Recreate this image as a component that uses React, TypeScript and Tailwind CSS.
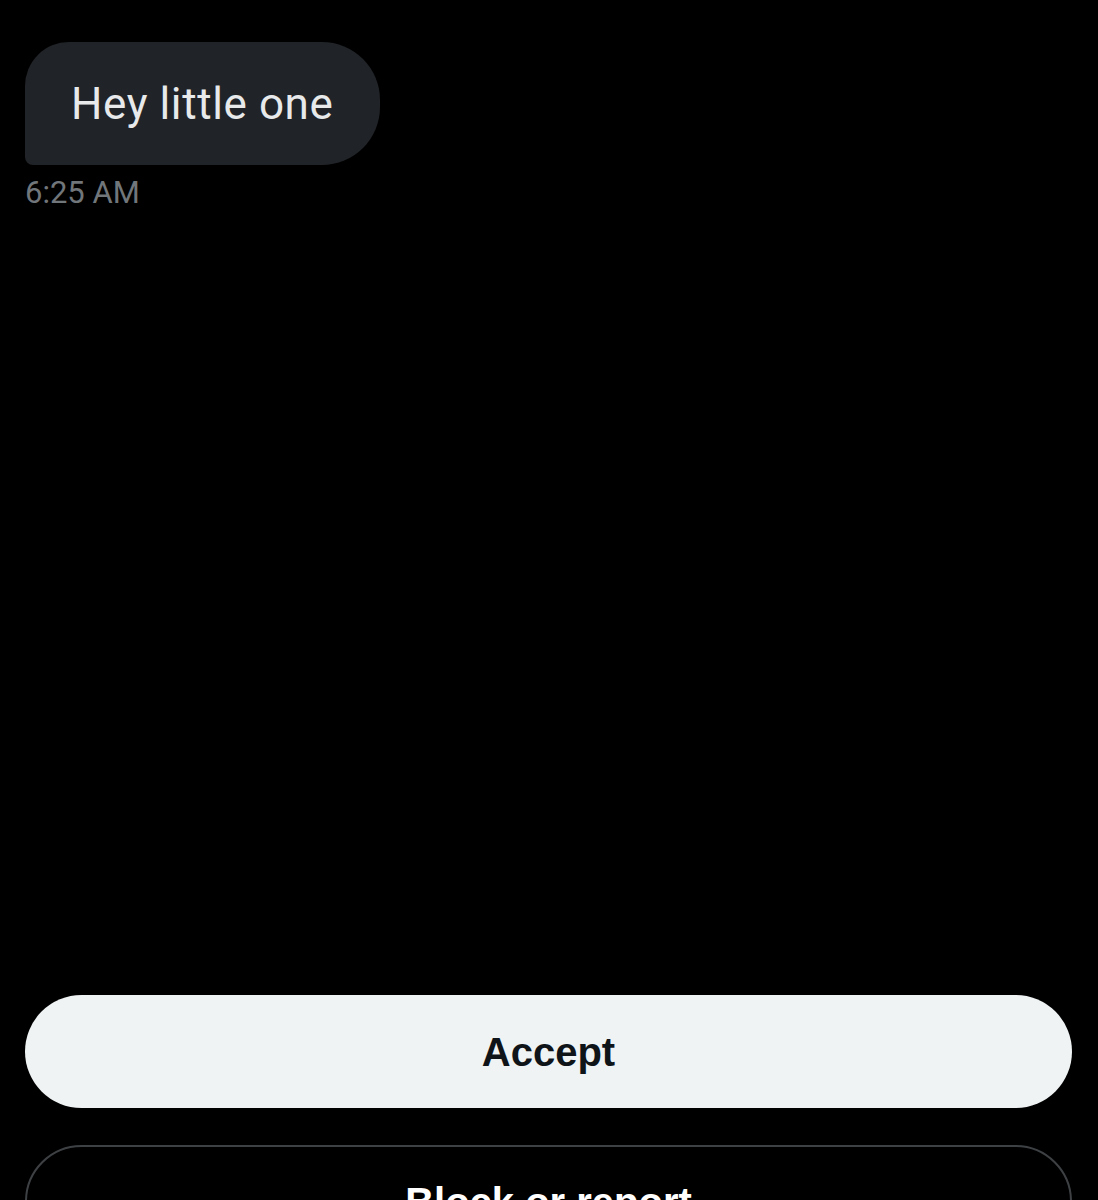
export default function App() {
    return (
        <div className="w-full h-[1200px] overflow-hidden bg-black px-[25px] pt-[42px]">
            {/* Message bubble */}
            <div className="flex flex-col items-start">
                <div className="h-[123px] flex items-center pl-[46px] pr-[47px] bg-[#202327] rounded-tl-[44px] rounded-tr-[58px] rounded-br-[58px] rounded-bl-[8px]">
                    <span
                        className="text-[44px] leading-none text-[#e7e9ea] tracking-[0.6px]"
                        style={{ fontFamily: "Roboto, sans-serif" }}
                    >
                        Hey little one
                    </span>
                </div>
                <span
                    className="mt-[10px] text-[31px] leading-[36px] text-[#71767b] tracking-[0px]"
                    style={{ fontFamily: "Roboto, sans-serif" }}
                >
                    6:25 AM
                </span>
            </div>

            {/* Actions */}
            <div
                className="mt-[784px] flex flex-col gap-[37px] pr-px"
                style={{ fontFamily: "'Liberation Sans', Arial, sans-serif" }}
            >
                <button className="h-[113px] w-full rounded-full bg-[#eff3f4] text-[#0f1419] text-[40px] font-bold">
                    Accept
                </button>
                <button className="h-[113px] w-full rounded-full border-[2.5px] border-[#3e4144] text-white text-[40px] font-bold">
                    Block or report
                </button>
            </div>
        </div>
    );
}
